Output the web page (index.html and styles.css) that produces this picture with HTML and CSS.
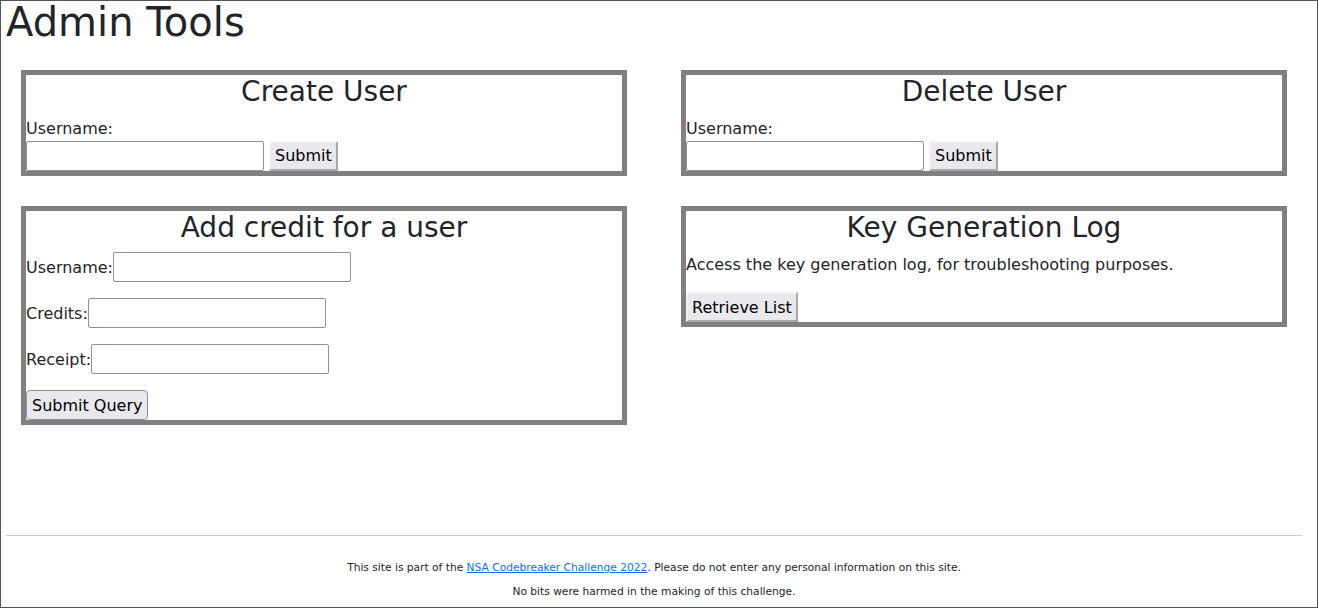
FILE: index.html
```html
<!DOCTYPE html>
<html lang="en">
<head>
<meta charset="utf-8">
<title>Admin Tools</title>
<link rel="stylesheet" href="styles.css">
</head>
<body>
<div class="frame">
  <h1 class="page-title">Admin Tools</h1>
  <div class="grid">
    <section class="box">
      <h3 class="box-title">Create User</h3>
      <form class="form">
        <label class="block-label">Username:</label>
        <div class="inline-row"><input class="field" type="text"> <button class="btn btn-flat" type="button">Submit</button></div>
      </form>
    </section>
    <section class="box">
      <h3 class="box-title">Delete User</h3>
      <form class="form">
        <label class="block-label">Username:</label>
        <div class="inline-row"><input class="field" type="text"> <button class="btn btn-flat" type="button">Submit</button></div>
      </form>
    </section>
    <section class="box">
      <h3 class="box-title">Add credit for a user</h3>
      <form class="form">
        <div class="field-row"><label>Username:</label><input class="field" type="text"></div>
        <div class="field-row"><label>Credits:</label><input class="field" type="text"></div>
        <div class="field-row"><label>Receipt:</label><input class="field" type="text"></div>
        <div class="field-row last"><button class="btn btn-round" type="button">Submit Query</button></div>
      </form>
    </section>
    <section class="box">
      <h3 class="box-title">Key Generation Log</h3>
      <p class="desc">Access the key generation log, for troubleshooting purposes.</p>
      <div class="inline-row"><button class="btn" type="button">Retrieve List</button></div>
    </section>
  </div>
  <div class="spacer"></div>
  <hr class="rule">
  <footer class="footer">
    <p>This site is part of the <a href="#">NSA Codebreaker Challenge 2022</a>. Please do not enter any personal information on this site.</p>
    <p class="last-line">No bits were harmed in the making of this challenge.</p>
  </footer>
</div>
</body>
</html>
```

FILE: styles.css
```css
* { box-sizing: border-box; }
html, body { margin: 0; padding: 0; background: #fff; }
body {
  font-family: "DejaVu Sans", sans-serif;
  font-size: 16px;
  line-height: 1.5;
  color: #212529;
}
.frame {
  width: 1318px;
  height: 608px;
  border: 1px solid #555;
  padding: 0 15px 0 5px;
  display: flex;
  flex-direction: column;
  overflow: hidden;
}
.page-title {
  margin: 0;
  font-size: 40px;
  font-weight: 400;
  line-height: 42px;
}
.grid {
  margin-top: 27px;
  padding-left: 15px;
  display: grid;
  grid-template-columns: 606px 606px;
  column-gap: 54px;
  row-gap: 30px;
  align-items: start;
}
.box {
  border: 5px solid #808080;
}
.box-title {
  margin: 0 0 8px;
  font-size: 28px;
  font-weight: 400;
  line-height: 1.2;
  text-align: center;
}
.form { margin: 0; }
.block-label { display: block; }
.inline-row {
  display: flex;
  align-items: center;
  gap: 5px;
}
.field-row {
  display: flex;
  align-items: center;
  margin-bottom: 16px;
}
.field-row label { padding-top: 2px; }
.field-row.last { margin-bottom: 0; }
.field {
  width: 238px;
  height: 30px;
  margin: 0;
  padding: 1px 2px;
  font: inherit;
  border: 1px solid #8f8f9d;
  border-radius: 2px;
  background: #fff;
}
.btn {
  height: 30px;
  margin: 0;
  padding: 2px 4px 0;
  font: inherit;
  color: #000;
  background: #e9e9ed;
  border: 2px solid;
  border-color: #f4f4f6 #a8a8ad #a8a8ad #f4f4f6;
  border-radius: 0;
}
.btn-flat { padding: 1px 4px; }
.btn-round {
  border: 1px solid #8f8f9d;
  border-radius: 4px;
  padding: 2px 5px 0;
}
.desc {
  margin: 0 0 15px;
  padding-top: 1px;
}
.spacer { flex: 1; }
.rule {
  margin: 0;
  border: 0;
  border-top: 1px solid #c8c9ca;
}
.footer {
  text-align: center;
  font-size: 10.67px;
  line-height: 16px;
  padding-top: 24px;
}
.footer p { margin: 0 0 8px; }
.footer .last-line { margin-bottom: 7px; }
.footer a { color: #0d6efd; text-decoration: underline; }
```
